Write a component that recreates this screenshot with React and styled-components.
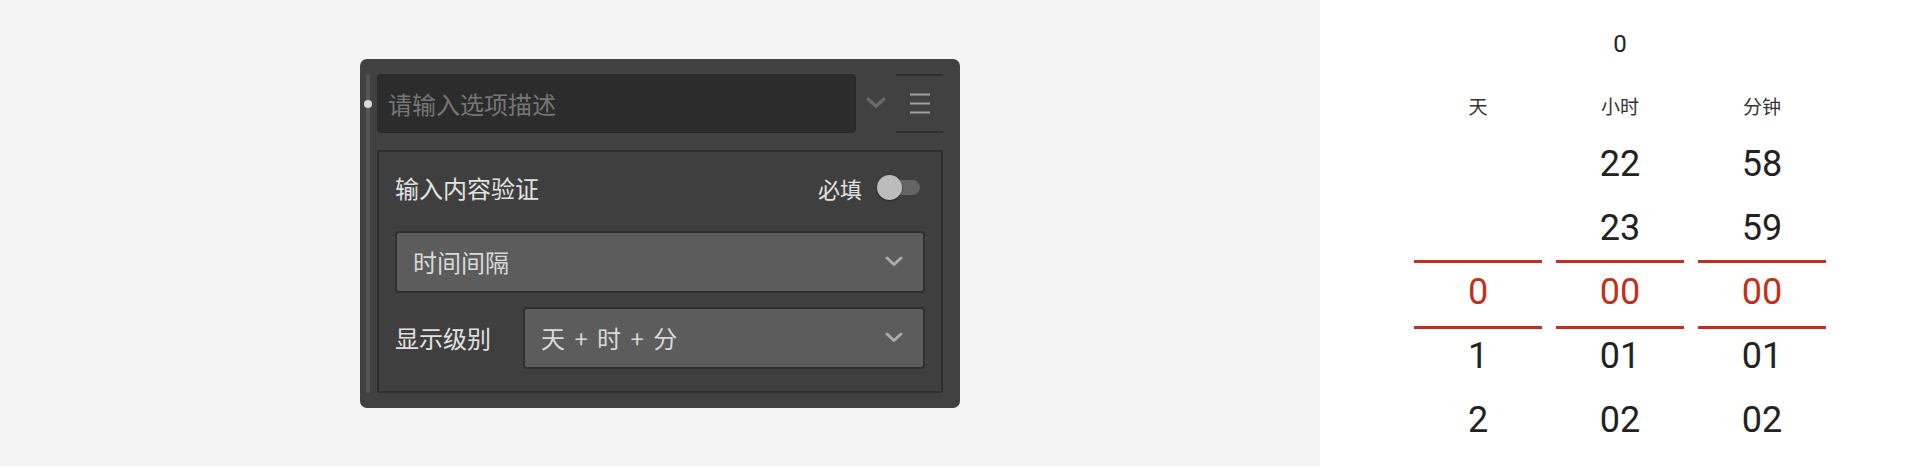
import React from "react";
import styled, { createGlobalStyle } from "styled-components";

const Global = createGlobalStyle`
  html, body { margin: 0; padding: 0; }
  body { font-family: "Noto Sans CJK SC", "Noto Sans", sans-serif; }
`;

const Page = styled.div`
  display: flex;
  width: 1920px;
  height: 466px;
`;

const Stage = styled.div`
  flex: 1;
  background: #f4f4f4;
  display: flex;
  align-items: center;
  justify-content: center;
`;

const Panel = styled.div`
  width: 600px;
  height: 349px;
  box-sizing: border-box;
  background: #414141;
  border-radius: 7px;
  padding: 15px 17px 15px 6px;
  display: flex;
  gap: 7px;
`;

const Rail = styled.div`
  position: relative;
  width: 4px;
  flex-shrink: 0;
  background: #555555;
  border-radius: 2px;
`;

const RailDot = styled.span`
  position: absolute;
  left: -2px;
  top: 26px;
  width: 8px;
  height: 8px;
  border-radius: 50%;
  background: #dcdcdc;
`;

const Content = styled.div`
  flex: 1;
  display: flex;
  flex-direction: column;
  gap: 17px;
`;

const TopRow = styled.div`
  display: flex;
  height: 59px;
`;

const DescInput = styled.input`
  flex: 1;
  min-width: 0;
  box-sizing: border-box;
  background: #2c2c2c;
  border: 1px solid #292929;
  border-radius: 4px;
  padding: 0 10px;
  font-family: "Noto Sans CJK SC", sans-serif;
  font-size: 24px;
  color: #ddd;
  outline: none;
  &::placeholder { color: #767676; }
`;

const IconSlot = styled.div`
  width: ${(p) => p.$w}px;
  flex-shrink: 0;
  display: flex;
  align-items: center;
  justify-content: center;
  box-sizing: border-box;
  ${(p) => (p.$ruled ? "border-top: 2px solid #2f2f2f; border-bottom: 2px solid #2f2f2f;" : "")}
`;

const InnerBox = styled.div`
  flex: 1;
  box-sizing: border-box;
  border: 2px solid #2e2e2e;
  border-radius: 3px;
  background: #3f3f3f;
  padding: 16px 16px 0 16px;
  display: flex;
  flex-direction: column;
`;

const TitleRow = styled.div`
  height: 40px;
  display: flex;
  align-items: center;
  justify-content: space-between;
  padding-right: 5px;
  margin-bottom: 23px;
`;

const Title = styled.span`
  font-size: 24px;
  color: #e2e2e2;
`;

const RequiredGroup = styled.div`
  display: flex;
  align-items: center;
  gap: 15px;
`;

const RequiredText = styled.span`
  font-size: 22px;
  color: #e2e2e2;
`;

const Toggle = styled.div`
  position: relative;
  width: 43px;
  height: 25px;
`;

const ToggleTrack = styled.span`
  position: absolute;
  left: 7px;
  right: 0;
  top: 5px;
  height: 15px;
  border-radius: 8px;
  background: #646464;
`;

const ToggleKnob = styled.span`
  position: absolute;
  left: 0;
  top: 0;
  width: 25px;
  height: 25px;
  border-radius: 50%;
  background: #bcbcbc;
  box-shadow: 0 1px 2px rgba(0, 0, 0, 0.35);
`;

const FieldRow = styled.div`
  display: flex;
  align-items: center;
  margin-top: ${(p) => p.$mt || 0}px;
`;

const FieldLabel = styled.span`
  width: 128px;
  flex-shrink: 0;
  font-size: 24px;
  color: #e2e2e2;
`;

const Select = styled.div`
  flex: 1;
  height: 62px;
  box-sizing: border-box;
  background: #5c5c5c;
  border: 2px solid #2f2f2f;
  border-radius: 4px;
  display: flex;
  align-items: center;
  justify-content: space-between;
  padding: 0 20px 0 16px;
  font-size: 24px;
  color: #dadada;
  word-spacing: 4px;
`;

const Chevron = ({ color, w = 18, h = 11 }) => (
  <svg width={w} height={h} viewBox="0 0 18 11">
    <polyline
      points="2,2 9,8.5 16,2"
      fill="none"
      stroke={color}
      strokeWidth="3"
      strokeLinecap="round"
      strokeLinejoin="round"
    />
  </svg>
);

const MenuIcon = () => (
  <svg width="20" height="21" viewBox="0 0 20 21">
    <rect x="0" y="0.5" width="20" height="2" fill="#a2a2a2" />
    <rect x="0" y="9.5" width="20" height="2" fill="#a2a2a2" />
    <rect x="0" y="18.5" width="20" height="2" fill="#a2a2a2" />
  </svg>
);

/* picker */
const PickerArea = styled.div`
  width: 600px;
  flex-shrink: 0;
  background: #ffffff;
  padding-top: 28px;
  box-sizing: border-box;
  display: flex;
  flex-direction: column;
  align-items: center;
  font-family: Roboto, "Noto Sans CJK SC", sans-serif;
`;

const Summary = styled.div`
  height: 32px;
  line-height: 32px;
  font-size: 24px;
  color: #222;
  margin-bottom: 34px;
`;

const Columns = styled.div`
  display: grid;
  grid-template-columns: repeat(3, 128px);
  column-gap: 14px;
`;

const Column = styled.div`
  display: flex;
  flex-direction: column;
`;

const ColLabel = styled.div`
  height: 28px;
  line-height: 28px;
  text-align: center;
  font-size: 19px;
  color: #333;
  margin-bottom: 10px;
`;

const Item = styled.div`
  position: relative;
  height: 64px;
  line-height: 64px;
  text-align: center;
  font-size: 36px;
  color: ${(p) => (p.$active ? "#c2301c" : "#222")};
  ${(p) =>
    p.$active
      ? `
  &::before, &::after {
    content: "";
    position: absolute;
    left: 0;
    right: 0;
    height: 3px;
    background: #c2301c;
  }
  &::before { top: 0; }
  &::after { top: 66px; }
  `
      : ""}
`;

const columns = [
  { label: "天", items: ["", "", "0", "1", "2"] },
  { label: "小时", items: ["22", "23", "00", "01", "02"] },
  { label: "分钟", items: ["58", "59", "00", "01", "02"] },
];

export default function App() {
  return (
    <>
      <Global />
      <Page>
        <Stage>
          <Panel>
            <Rail>
              <RailDot />
            </Rail>
            <Content>
              <TopRow>
                <DescInput placeholder="请输入选项描述" />
                <IconSlot $w={40}>
                  <Chevron color="#6a6a6a" w={20} h={12} />
                </IconSlot>
                <IconSlot $w={47} $ruled>
                  <MenuIcon />
                </IconSlot>
              </TopRow>
              <InnerBox>
                <TitleRow>
                  <Title>输入内容验证</Title>
                  <RequiredGroup>
                    <RequiredText>必填</RequiredText>
                    <Toggle>
                      <ToggleTrack />
                      <ToggleKnob />
                    </Toggle>
                  </RequiredGroup>
                </TitleRow>
                <FieldRow>
                  <Select>
                    <span>时间间隔</span>
                    <Chevron color="#ababab" />
                  </Select>
                </FieldRow>
                <FieldRow $mt={14}>
                  <FieldLabel>显示级别</FieldLabel>
                  <Select>
                    <span>天 + 时 + 分</span>
                    <Chevron color="#ababab" />
                  </Select>
                </FieldRow>
              </InnerBox>
            </Content>
          </Panel>
        </Stage>
        <PickerArea>
          <Summary>0</Summary>
          <Columns>
            {columns.map((c) => (
              <Column key={c.label}>
                <ColLabel>{c.label}</ColLabel>
                {c.items.map((it, i) => (
                  <Item key={i} $active={i === 2}>
                    {it}
                  </Item>
                ))}
              </Column>
            ))}
          </Columns>
        </PickerArea>
      </Page>
    </>
  );
}
